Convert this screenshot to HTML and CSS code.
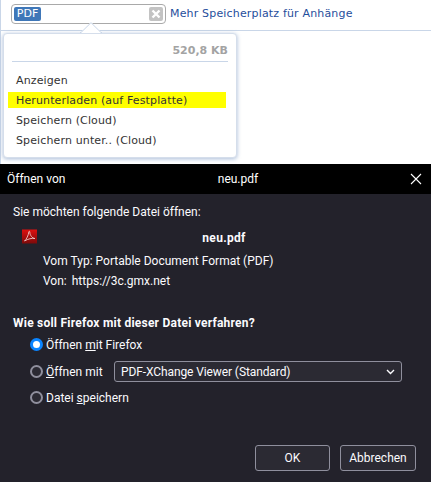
FILE: index.html
```html
<!DOCTYPE html>
<html lang="de">
<head>
  <meta charset="UTF-8" />
  <meta name="viewport" content="width=device-width, initial-scale=1.0"/>
  <title>Öffnen von neu.pdf</title>
  <link rel="stylesheet" href="styles.css">
</head>
<body>
  <!-- Mail page behind the dialog -->
  <div class="mail">
    <div class="attach-bar">
      <div class="attach-box">
        <span class="pdf-tag">PDF</span>
        <span class="attach-remove">
          <svg width="10" height="10" viewBox="0 0 10 10"><path d="M1.5 1.5l7 7M8.5 1.5l-7 7" stroke="#fff" stroke-width="2.4" fill="none"/></svg>
        </span>
      </div>
      <a class="more-link">Mehr Speicherplatz für Anhänge</a>
    </div>

    <div class="popup">
      <svg class="popup-arrow" width="22" height="11" viewBox="0 0 22 11"><path d="M0 11L11 0l11 11z" fill="#fff"/><path d="M0 10.500h1L11 .7 21 10.500h1" fill="none" stroke="#c9d6e8"/></svg>
      <div class="popup-size">520,8 KB</div>
      <ul class="popup-menu">
        <li>Anzeigen</li>
        <li class="marked">Herunterladen (auf Festplatte)</li>
        <li>Speichern (Cloud)</li>
        <li>Speichern unter.. (Cloud)</li>
      </ul>
    </div>
  </div>

  <!-- Firefox dialog -->
  <div class="dialog">
    <div class="titlebar">
      <span class="title-left">Öffnen von</span>
      <span class="title-center">neu.pdf</span>
      <svg class="title-close" width="12" height="12" viewBox="0 0 12 12"><path d="M1 1l10 10M11 1L1 11" stroke="#fff" stroke-width="1.1" fill="none"/></svg>
    </div>

    <div class="dialog-body">
      <p class="intro">Sie möchten folgende Datei öffnen:</p>
      <div class="file-row">
        <svg class="pdf-icon" width="15" height="15" viewBox="0 0 15 15">
          <defs><linearGradient id="red" x1="0" y1="0" x2="0" y2="1"><stop offset="0" stop-color="#e0100f"/><stop offset="1" stop-color="#7c0a0a"/></linearGradient></defs>
          <rect width="15" height="14" y=".5" fill="url(#red)"/>
          <path d="M2.500 12C4.500 10.500 6.500 6 6.800 3c.1-1 1-1 1 .2 0 2.800 2.500 6.300 5.200 6.300-3-.5-7 .3-10.500 2.500z" fill="none" stroke="#eec4c4" stroke-width=".9"/>
        </svg>
        <span class="file-name">neu.pdf</span>
      </div>
      <div class="meta">
        <div class="meta-row"><span>Vom Typ:</span><span>Portable Document Format (PDF)</span></div>
        <div class="meta-row"><span>Von:</span><span>https://3c.gmx.net</span></div>
      </div>

      <p class="question">Wie soll Firefox mit dieser Datei verfahren?</p>
      <div class="choices">
        <div class="choice"><span class="radio checked"></span><span>Öffnen <u>m</u>it Firefox</span></div>
        <div class="choice with-select">
          <span class="radio"></span><span><u>Ö</u>ffnen mit</span>
          <div class="select">
            <span>PDF-XChange Viewer (Standard)</span>
            <svg width="9" height="6" viewBox="0 0 9 6"><path d="M1 1l3.500 3.500L8 1" stroke="#fbfbfe" stroke-width="1.400" fill="none"/></svg>
          </div>
        </div>
        <div class="choice"><span class="radio"></span><span>Datei <u>s</u>peichern</span></div>
      </div>

      <div class="buttons">
        <button class="btn btn-ok">OK</button>
        <button class="btn btn-cancel">Abbrechen</button>
      </div>
    </div>
  </div>
</body>
</html>
```

FILE: styles.css
```css
html, body {
  margin: 0;
  padding: 0;
}

body {
  width: 431px;
  height: 482px;
  overflow: hidden;
  background: #fff;
  font-family: Roboto, sans-serif;
}

/* Mail page */
.mail {
  position: relative;
  height: 164px;
  box-sizing: border-box;
  border-left: 1px solid #c9d6e8;
  background: #fff;
}

.attach-bar {
  height: 31px;
  box-sizing: border-box;
  border-bottom: 1px solid #c9d6e8;
  padding: 4px 0 0 10px;
  display: flex;
  align-items: flex-start;
  gap: 4px;
}

.attach-box {
  width: 155px;
  height: 20px;
  box-sizing: border-box;
  border: 1px solid #a9a9a9;
  border-radius: 4px;
  padding: 2px;
  display: flex;
  justify-content: space-between;
  align-items: center;
  background: #fff;
}

.pdf-tag {
  width: 27px;
  height: 14px;
  background: #3f77b8;
  border-radius: 2px;
  color: #fff;
  font: 11px/14px "DejaVu Sans", sans-serif;
  text-align: center;
}

.attach-remove {
  width: 14px;
  height: 14px;
  background: #c3c3c3;
  border-radius: 2px;
  display: flex;
  align-items: center;
  justify-content: center;
}

.more-link {
  color: #1f4e9c;
  font: 11px/19px "DejaVu Sans", sans-serif;
  letter-spacing: .17px;
}

.popup {
  position: absolute;
  left: 2px;
  top: 33px;
  width: 234px;
  height: 125px;
  box-sizing: border-box;
  background: #fff;
  border: 1px solid #d5deeb;
  border-radius: 4px;
  box-shadow: 0 1px 4px rgba(120, 150, 195, .65);
  padding: 0 8px;
  font: 11px/20px "DejaVu Sans", sans-serif;
  color: #333;
}

.popup-arrow {
  position: absolute;
  left: 76px;
  top: -12px;
}

.popup-size {
  height: 28px;
  padding-top: 7px;
  box-sizing: border-box;
  border-bottom: 1px solid #c9d6e8;
  text-align: right;
  font-weight: bold;
  color: #a3a3a3;
}

.popup-menu {
  list-style: none;
  margin: 8px 2px 0 -4px;
  padding: 0;
  letter-spacing: .13px;
}

.popup-menu li {
  height: 20px;
  padding-left: 8px;
  line-height: 21px;
}

.popup-menu li.marked {
  height: 16px;
  margin: 2px 0;
  line-height: 17px;
  background: #ffff00;
}

/* Dialog */
.dialog {
  height: 318px;
  background: #23222b;
  color: #fbfbfe;
  font-size: 12px;
}

.titlebar {
  height: 30px;
  background: #000;
  position: relative;
  display: flex;
  align-items: center;
  justify-content: center;
  color: #fff;
}

.title-left {
  position: absolute;
  left: 7px;
}

.title-center {
  margin-left: 45px;
}

.title-close {
  position: absolute;
  right: 9px;
  top: 9px;
}

.dialog-body {
  padding: 10px 13px 0;
}

.intro {
  margin: 0;
  line-height: 17px;
}

.file-row {
  display: flex;
  align-items: center;
  height: 18px;
  margin-top: 9px;
  padding-left: 9px;
  position: relative;
}

.pdf-icon {
  margin-bottom: 5px;
}

.file-name {
  font-weight: bold;
  letter-spacing: .3px;
  position: absolute;
  left: 0;
  right: 0;
  text-align: center;
  top: 1px;
  padding-left: 17px;
}

.meta {
  margin: 5px 0 0 30px;
  line-height: 17px;
}

.meta-row {
  display: flex;
  gap: 5px;
  margin-bottom: 3px;
}

.meta-row:first-child {
  gap: 3px;
}

.question {
  margin: 25px 0 0;
  font-weight: bold;
  letter-spacing: .23px;
  line-height: 17px;
}

.choices {
  margin: 4px 0 0 17px;
}

.choice {
  display: flex;
  align-items: center;
  gap: 3px;
  height: 17px;
  margin-bottom: 8px;
}

.with-select {
  height: 21px;
  margin-bottom: 7px;
}

.radio {
  width: 13px;
  height: 13px;
  box-sizing: border-box;
  border-radius: 50%;
  border: 2px solid #8f8f9d;
  background: #2b2a33;
}

.radio.checked {
  border: 3.5px solid #0a84ff;
  background: #fff;
}

.select {
  width: 288px;
  height: 21px;
  box-sizing: border-box;
  margin: 0 16px 0 auto;
  padding: 0 6px;
  border: 1px solid #8f8f9d;
  border-radius: 3px;
  background: #2b2a33;
  display: flex;
  align-items: center;
  justify-content: space-between;
  letter-spacing: -.1px;
}

.buttons {
  display: flex;
  justify-content: flex-end;
  gap: 10px;
  margin: 39px 2px 0 0;
}

.btn {
  height: 26px;
  box-sizing: border-box;
  padding: 0;
  border: 1px solid #8f8f9d;
  border-radius: 3px;
  background: #2b2a33;
  color: #fbfbfe;
  font: 12px Roboto, sans-serif;
}

.btn-ok {
  width: 75px;
}

.btn-cancel {
  width: 76px;
}
```
